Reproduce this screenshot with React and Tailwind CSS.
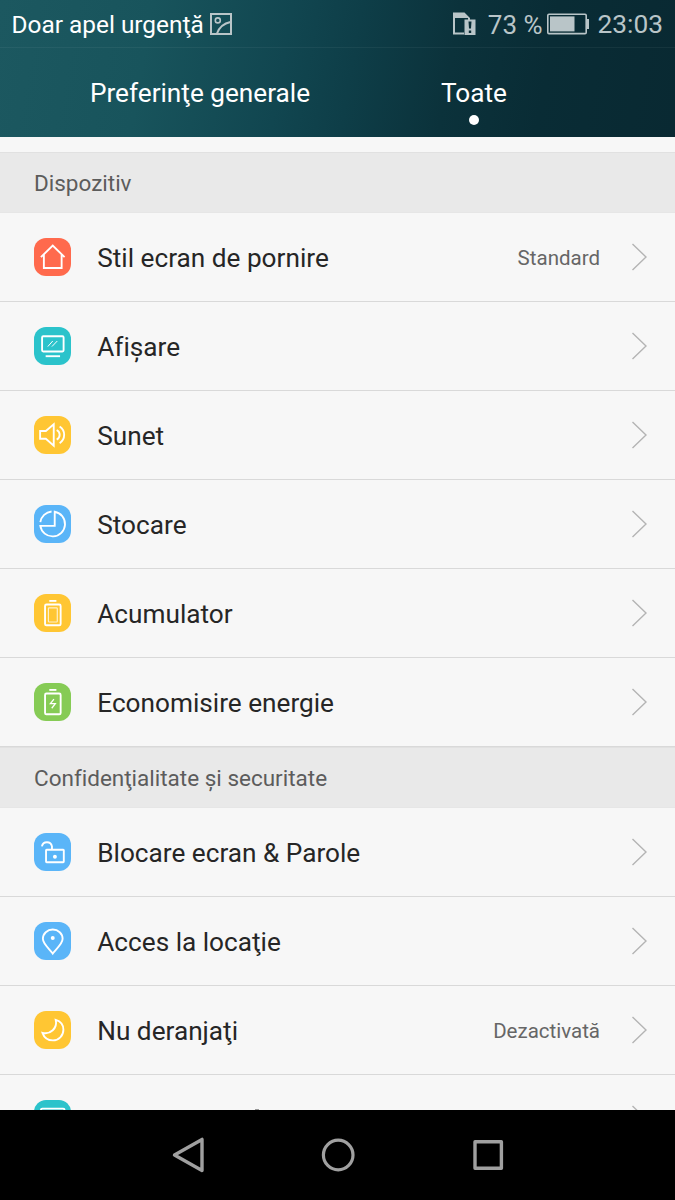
import React from 'react';

const glyphs = {
    home: (
        <path d="M7 19.4 L19 7.6 L31 19.4 M10 17 V30.4 H28 V17" />
    ),
    display: (
        <>
            <rect x="8.2" y="9.4" width="21.8" height="15.4" rx="1.2" />
            <path d="M11.8 29.6 H26.4" />
            <path d="M14 19.8 L19 14.2 M18.2 19.8 L23.6 14.2" strokeWidth="1" />
        </>
    ),
    sound: (
        <>
            <path d="M6.2 15.2 H12 L20 8.4 V30 L12 23 H6.2 Z" />
            <path d="M23 14.2 A5.5 5.5 0 0 1 23 24 M26 10.6 A10.2 10.2 0 0 1 26 27.6" />
        </>
    ),
    storage: (
        <>
            <path d="M21 6.8 A12.6 12.6 0 1 1 6.4 21.2 H21 Z" />
            <path d="M6.4 17.4 A12.8 12.8 0 0 1 17.8 6.6" />
        </>
    ),
    battery: (
        <>
            <rect x="11.2" y="10.7" width="15.8" height="21" rx="1.4" />
            <path d="M15.5 7 H22.7" />
            <rect x="14.6" y="14" width="9" height="14.4" rx="0.8" strokeWidth="1.2" strokeOpacity="0.75" />
        </>
    ),
    saver: (
        <>
            <rect x="11.2" y="10.7" width="15.8" height="21" rx="1.4" />
            <path d="M15.5 7 H22.7" />
            <path d="M20.2 16.4 L16.6 21 H21.6 L18 25.6" strokeWidth="1.3" />
        </>
    ),
    lock: (
        <>
            <rect x="12.2" y="17" width="18" height="12.6" rx="0.6" />
            <path d="M18.2 17 V13.6 A5.2 5.2 0 0 0 8 13.6" />
            <circle cx="21.2" cy="24" r="2" fill="white" stroke="none" />
        </>
    ),
    location: (
        <>
            <path d="M19 32 C16.5 28 9 22.4 9 17 A10 9.4 0 0 1 29 17 C29 22.4 21.5 28 19 32 Z" />
            <circle cx="19" cy="16.3" r="2" fill="white" stroke="none" />
        </>
    ),
    moon: (
        <path d="M22 9 C27 10.5 29.8 14.5 29.8 19 C29.8 25 25 29.8 19.2 29.8 C14.5 29.8 10.2 27 8.6 22.2 C16.5 24.2 24 17.5 22 9 Z" />
    ),
    panel: (
        <rect x="7" y="8.8" width="24" height="20" rx="1.4" />
    ),
};

const device = [
    { label: 'Stil ecran de pornire', icon: 'home', color: 'bg-[#ff6a4d]', value: 'Standard' },
    { label: 'Afișare', icon: 'display', color: 'bg-[#2bc3cb]' },
    { label: 'Sunet', icon: 'sound', color: 'bg-[#ffc633]' },
    { label: 'Stocare', icon: 'storage', color: 'bg-[#5ab5f8]' },
    { label: 'Acumulator', icon: 'battery', color: 'bg-[#ffc633]' },
    { label: 'Economisire energie', icon: 'saver', color: 'bg-[#86cb55]' },
];

const privacy = [
    { label: 'Blocare ecran & Parole', icon: 'lock', color: 'bg-[#5ab5f8]' },
    { label: 'Acces la locaţie', icon: 'location', color: 'bg-[#5ab5f8]' },
    { label: 'Nu deranjaţi', icon: 'moon', color: 'bg-[#ffc633]', value: 'Dezactivată' },
];

const Chevron = () => (
    <svg width="17" height="28" viewBox="0 0 17 28" className="ml-[31px] shrink-0" fill="none" stroke="#b4b4b4" strokeWidth="1.4">
        <path d="M1.5 1 L15 14 L1.5 27" />
    </svg>
);

const Badge = ({ icon, color }) => (
    <span className={`h-[37.5px] w-[37.5px] shrink-0 rounded-[12px] ${color}`}>
        <svg viewBox="0 0 38 38" className="h-full w-full" fill="none" stroke="white" strokeWidth="1.9">
            {glyphs[icon]}
        </svg>
    </span>
);

const Section = ({ title, rows }) => (
    <section>
        <h2 className="flex h-[61px] items-center border-y border-t-[#e1e1e1] border-b-[#e6e6e6] bg-[#e9e9e9] pt-0.5 pl-[34px] text-[22.5px] text-[#5c5c5c]">
            {title}
        </h2>
        <ul>
            {rows.map((row) => (
                <li key={row.label} className="flex h-[89px] items-center border-b border-[#d9d9d9] pr-[27px] pl-[33.75px]">
                    <Badge icon={row.icon} color={row.color} />
                    <span className="ml-[26px] flex-1 pt-1 text-[26.2px] text-[#262626]">{row.label}</span>
                    {row.value && <span className="pt-[3px] text-[20.5px] text-[#666]">{row.value}</span>}
                    <Chevron />
                </li>
            ))}
        </ul>
    </section>
);

const StatusBar = () => (
    <div className="flex h-12 items-center border-b border-white/5 pr-3 pl-[11.5px] text-[26px] text-[#b9c5c8]">
        <span className="pt-[3px] text-[24.4px] text-white">Doar apel urgenţă</span>
        <svg width="22" height="22" viewBox="0 0 22 22" className="ml-1.5" fill="none" stroke="#b9c5c8" strokeWidth="2">
            <rect x="1" y="1" width="20" height="20" />
            <circle cx="7.8" cy="7.4" r="2.5" strokeWidth="1.6" />
            <path d="M7 20.5 C9 15 13 10.5 20.5 9" />
        </svg>
        {/* SIM warning */}
        <svg width="24" height="24" viewBox="0 0 24 24" className="ml-auto" fill="#b9c5c8">
            <path d="M1 0.5 H12.5 L18 6 V8 H16 V6 H3 V20.5 H12 V22.5 H1 Z" />
            <path d="M12.5 7.5 H23.5 V23 H12.5 Z" />
            <path d="M16.5 9.5 H19.5 L19 16.5 H17 Z M16.8 18.5 H19.2 V21 H16.8 Z" fill="#0a2d36" />
        </svg>
        <span className="ml-3 pt-[3px]">73 %</span>
        <svg width="42" height="22" viewBox="0 0 42 22" className="ml-1" fill="#b9c5c8">
            <rect x="0.8" y="1.2" width="38.4" height="19.4" rx="1.2" fill="none" stroke="#b9c5c8" strokeWidth="1.6" />
            <rect x="3" y="3.4" width="24.5" height="15" />
            <rect x="39.8" y="6" width="2.2" height="10" />
        </svg>
        <span className="ml-[9px] pt-[3px] text-[26.3px]">23:03</span>
    </div>
);

const App = () => (
    <div className="flex h-[1200px] w-[675px] flex-col overflow-hidden bg-[#f7f7f7] font-['Roboto',sans-serif] [font-variant-ligatures:none]">
        <header className="h-[137px] shrink-0 bg-[linear-gradient(100deg,#1c5860_0%,#18545c_22%,#114650_42%,#0e3e48_52%,#0b323b_66%,#092c35_80%,#092932_100%)]">
            <StatusBar />
            <nav className="flex h-[89px] text-[26.2px] text-white">
                <span className="w-[400px] pt-[26px] text-center">Preferinţe generale</span>
                <div className="flex w-[148px] flex-col items-center pt-[26px]">
                    <span>Toate</span>
                    <span className="mt-0.5 h-2.5 w-2.5 rounded-full bg-white" />
                </div>
            </nav>
        </header>

        <main className="min-h-0 flex-1 overflow-hidden pt-[15px]">
            <Section title="Dispozitiv" rows={device} />
            <Section title="Confidenţialitate și securitate" rows={privacy} />
            {/* next row, mostly scrolled under the navigation bar */}
            <div className="flex h-[89px] items-start pt-[25px] pr-[27px] pl-[33.75px]">
                <Badge icon="panel" color="bg-[#2bc3cb]" />
                <span className="mt-[9px] ml-[184px] h-px w-1 bg-[#999]" />
                <span className="mt-[5px] ml-auto"><Chevron /></span>
            </div>
        </main>

        {/* Android navigation keys */}
        <footer className="flex h-[90px] shrink-0 items-center bg-black pl-[171px]">
            <svg width="34" height="36" viewBox="0 0 34 36" fill="none" stroke="#a0a0a0" strokeWidth="3.4" strokeLinejoin="round">
                <path d="M3.5 18 L31 2.4 V33.6 Z" />
            </svg>
            <svg width="36" height="36" viewBox="0 0 36 36" className="ml-[115px]" fill="none" stroke="#a0a0a0" strokeWidth="3.2">
                <circle cx="18.2" cy="18" r="14.8" />
            </svg>
            <svg width="32" height="32" viewBox="0 0 32 32" className="ml-[116px]" fill="none" stroke="#a0a0a0" strokeWidth="3.4" strokeLinejoin="round">
                <rect x="3" y="2.8" width="26.4" height="26.4" />
            </svg>
        </footer>
    </div>
);

export default App;
